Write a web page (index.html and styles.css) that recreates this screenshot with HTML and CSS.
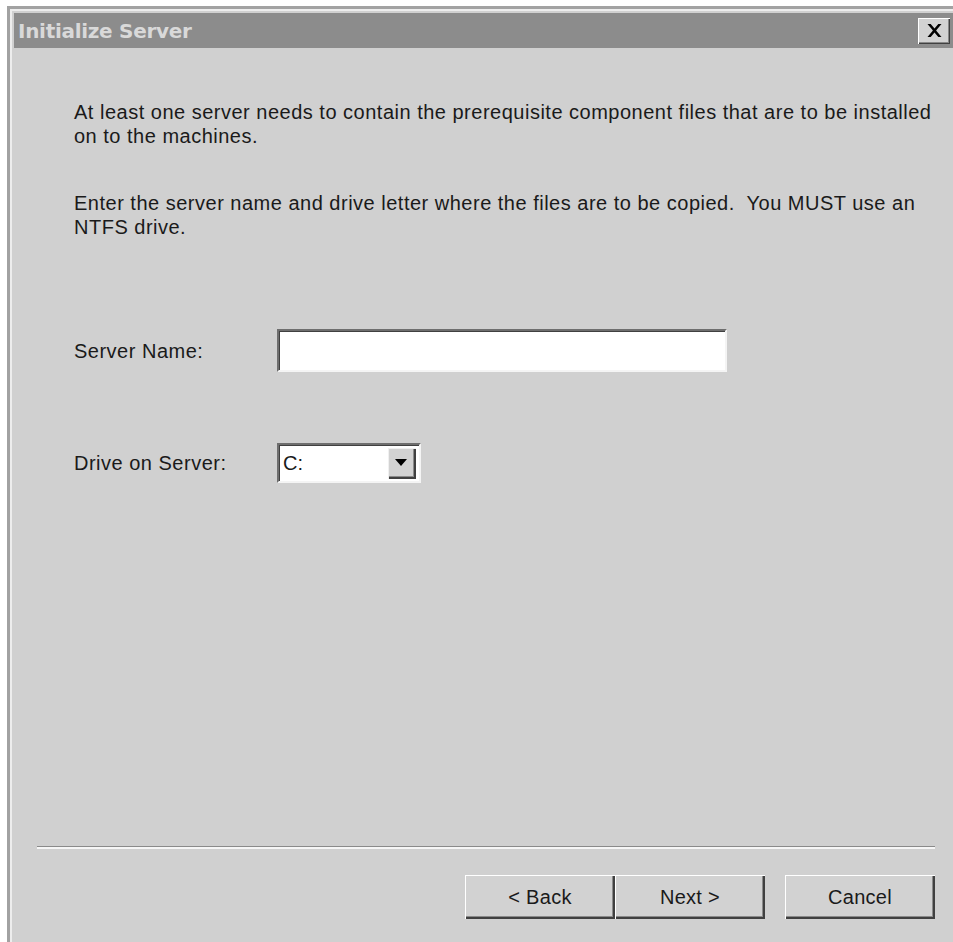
FILE: index.html
```html
<!DOCTYPE html>
<html>
<head>
<meta charset="utf-8">
<title>Initialize Server</title>
<link rel="stylesheet" href="styles.css">
</head>
<body>
<div class="window">
  <div class="frame">
    <div class="titlebar">
      <span class="title">Initialize Server</span>
      <button class="close" type="button" aria-label="Close">
        <svg width="15" height="13" viewBox="0 0 15 13"><path d="M0.5 0h3.2l3.8 4.6 3.8-4.6h3.2L9.1 6.5l5.4 6.5h-3.2L7.5 8.4 3.7 13H0.5l5.4-6.5z" fill="#000"/></svg>
      </button>
    </div>
    <div class="content">
      <p class="text">At least one server needs to contain the prerequisite component files that are to be installed<br>on to the machines.</p>
      <p class="text para2">Enter the server name and drive letter where the files are to be copied.&nbsp; You MUST use an<br>NTFS drive.</p>

      <div class="row row-name">
        <span class="label">Server Name:</span>
        <div class="field"></div>
      </div>
      <div class="row row-drive">
        <span class="label">Drive on Server:</span>
        <div class="combo">
          <span class="combo-value">C:</span>
          <span class="combo-btn">
            <svg width="12" height="7" viewBox="0 0 12 7"><path d="M0 0h12L6 7z" fill="#000"/></svg>
          </span>
        </div>
      </div>

      <div class="footer">
        <div class="separator"></div>
        <div class="buttons">
          <button class="btn" type="button">&lt; Back</button>
          <button class="btn" type="button">Next &gt;</button>
          <button class="btn btn-cancel" type="button">Cancel</button>
        </div>
      </div>
    </div>
  </div>
</div>
</body>
</html>
```
FILE: styles.css
```css
html, body {
  margin: 0;
  padding: 0;
  height: 100%;
  background: #ffffff;
  overflow: hidden;
}

body {
  font-family: "Liberation Sans", Arial, sans-serif;
  color: #1a1a1a;
}

.window {
  box-sizing: border-box;
  height: calc(100% - 6px);
  margin: 6px 0 0 7px;
  border-top: 3px solid #a2a2a2;
  border-left: 3px solid #a2a2a2;
  background: #d0d0d0;
}

.frame {
  box-sizing: border-box;
  height: 100%;
  border-top: 2px solid #ededed;
  border-left: 2px solid #ededed;
  padding: 2px 0 0 2px;
  display: flex;
  flex-direction: column;
}

.titlebar {
  height: 35px;
  flex: none;
  background: #8c8c8c;
  display: flex;
  align-items: center;
  padding-left: 4px;
  padding-right: 3px;
}

.title {
  font-family: "DejaVu Sans", Tahoma, sans-serif;
  font-weight: bold;
  font-size: 20px;
  color: #d9d9d9;
  flex: 1;
  letter-spacing: -0.3px;
}

.close {
  width: 32px;
  height: 26px;
  padding: 0;
  margin: 0;
  border: none;
  background: #d2d2d2;
  box-shadow: inset 1px 1px 0 #ffffff, inset -1px -1px 0 #404040, inset -2px -2px 0 #888888;
  display: flex;
  align-items: center;
  justify-content: center;
}

.content {
  flex: 1;
  display: flex;
  flex-direction: column;
  padding: 52px 18px 23px 23px;
}

.text {
  margin: 0 0 0 37px;
  font-size: 20px;
  line-height: 24px;
  letter-spacing: 0.5px;
  white-space: nowrap;
}

.para2 {
  margin-top: 43px;
}

.row {
  display: flex;
  align-items: center;
  margin-left: 37px;
}

.row-name {
  margin-top: 90px;
}

.row-drive {
  margin-top: 71px;
}

.label {
  width: 203px;
  font-size: 20px;
  line-height: 24px;
  letter-spacing: 0.5px;
  flex: none;
}

.field {
  box-sizing: border-box;
  width: 450px;
  height: 43px;
  background: #ffffff;
  border-top: 2px solid #6e6e6e;
  border-left: 2px solid #6e6e6e;
  border-right: 2px solid #f4f4f4;
  border-bottom: 2px solid #f4f4f4;
  box-shadow: inset 1px 1px 0 #404040;
}

.combo {
  box-sizing: border-box;
  width: 144px;
  height: 40px;
  background: #ffffff;
  border-top: 2px solid #6e6e6e;
  border-left: 2px solid #6e6e6e;
  border-right: 2px solid #f4f4f4;
  border-bottom: 2px solid #f4f4f4;
  box-shadow: inset 1px 1px 0 #404040;
  display: flex;
  align-items: center;
  padding: 0 3px 0 4px;
}

.combo-value {
  flex: 1;
  font-size: 20px;
  line-height: 24px;
}

.combo-btn {
  box-sizing: border-box;
  width: 28px;
  height: 31px;
  background: #d2d2d2;
  box-shadow: inset 1px 1px 0 #f0f0f0, inset -2px -2px 0 #404040, inset -3px -3px 0 #8a8a8a;
  display: flex;
  align-items: center;
  justify-content: center;
  padding-right: 2px;
  padding-bottom: 2px;
}

.footer {
  margin-top: auto;
}

.separator {
  height: 1px;
  background: #8a8a8a;
  border-bottom: 2px solid #f6f6f6;
}

.buttons {
  display: flex;
  justify-content: flex-end;
  margin-top: 26px;
}

.btn {
  box-sizing: border-box;
  width: 150px;
  height: 44px;
  margin: 0;
  padding: 0;
  border: none;
  background: #d2d2d2;
  font-family: "Liberation Sans", Arial, sans-serif;
  font-size: 20px;
  letter-spacing: 0.3px;
  color: #1a1a1a;
  box-shadow: inset 1px 1px 0 #ffffff, inset -2px -2px 0 #404040, inset -3px -3px 0 #8a8a8a;
}

.btn-cancel {
  margin-left: 20px;
}
```
